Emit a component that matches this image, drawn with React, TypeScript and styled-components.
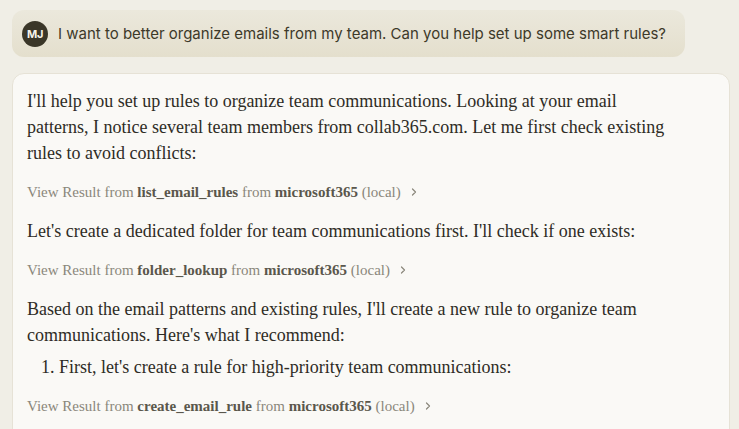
import React from "react";
import styled, { createGlobalStyle } from "styled-components";

const Global = createGlobalStyle`
  html, body { margin: 0; padding: 0; background: #f0eee6; }
  body { width: 739px; height: 429px; overflow: hidden; }
`;

const Page = styled.div`
  display: flex;
  flex-direction: column;
  align-items: flex-start;
  padding: 10px 9px 0 12px;
  gap: 16px;
`;

const UserBubble = styled.div`
  display: inline-flex;
  align-items: center;
  gap: 10px;
  height: 47px;
  box-sizing: border-box;
  padding: 0 19px 0 10px;
  border-radius: 12px;
  background: linear-gradient(180deg, #ebe8dc 0%, #e4dfcd 100%);
`;

const Avatar = styled.div`
  width: 26px;
  height: 26px;
  border-radius: 50%;
  background: #3a3628;
  color: #f5f2ea;
  display: flex;
  align-items: center;
  justify-content: center;
  font-family: Inter, "Liberation Sans", sans-serif;
  font-weight: 700;
  font-size: 11px;
  letter-spacing: -0.3px;
`;

const UserText = styled.div`
  font-family: Inter, "Liberation Sans", sans-serif;
  font-size: 15px;
  color: #3d3929;
`;

const Card = styled.div`
  align-self: stretch;
  background: #faf9f6;
  border: 1px solid #e6e2d6;
  border-radius: 12px;
  padding: 14px 14px 30px 14px;
  box-sizing: border-box;
  font-family: "Liberation Serif", serif;
  color: #2e2c25;
`;

const Para = styled.p`
  margin: 0;
  font-size: 18px;
  line-height: 26px;
`;

const ResultRow = styled.div<{ $top: number; $bottom: number }>`
  margin: ${(p) => p.$top}px 0 ${(p) => p.$bottom}px;
  font-size: 15px;
  line-height: 20px;
  color: #8a877b;
  display: flex;
  align-items: center;
`;

const Strong = styled.span`
  color: #5a574c;
  font-weight: 700;
`;

const Chevron = styled.span`
  margin-left: 9px;
  display: inline-flex;
  color: #8a877b;
`;

const List = styled.ol`
  margin: 6px 0 0;
  padding-left: 32px;
  font-size: 18px;
  line-height: 26px;
`;

function Result({ tool, top, bottom }: { tool: string; top: number; bottom: number }) {
  return (
    <ResultRow $top={top} $bottom={bottom}>
      <span>
        View Result from <Strong>{tool}</Strong> from <Strong>microsoft365</Strong> (local)
      </span>
      <Chevron>
        <svg width="8" height="10" viewBox="0 0 8 10" fill="none">
          <path d="M2.5 2 L5.5 5 L2.5 8" stroke="currentColor" strokeWidth="1.2" strokeLinecap="round" strokeLinejoin="round" />
        </svg>
      </Chevron>
    </ResultRow>
  );
}

export default function App() {
  return (
    <>
      <Global />
      <Page>
        <UserBubble>
          <Avatar>MJ</Avatar>
          <UserText>I want to better organize emails from my team. Can you help set up some smart rules?</UserText>
        </UserBubble>
        <Card>
          <Para>
            I'll help you set up rules to organize team communications. Looking at your email
            <br />
            patterns, I notice several team members from collab365.com. Let me first check existing
            <br />
            rules to avoid conflicts:
          </Para>
          <Result tool="list_email_rules" top={16} bottom={16} />
          <Para>Let's create a dedicated folder for team communications first. I'll check if one exists:</Para>
          <Result tool="folder_lookup" top={16} bottom={16} />
          <Para>
            Based on the email patterns and existing rules, I'll create a new rule to organize team
            <br />
            communications. Here's what I recommend:
          </Para>
          <List>
            <li>First, let's create a rule for high-priority team communications:</li>
          </List>
          <Result tool="create_email_rule" top={16} bottom={0} />
        </Card>
      </Page>
    </>
  );
}
